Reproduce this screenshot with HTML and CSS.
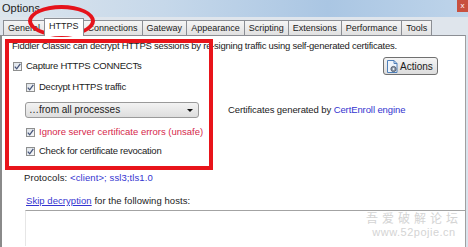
FILE: index.html
```html
<!DOCTYPE html>
<html lang="en">
<head>
    <meta charset="UTF-8">
    <meta name="viewport" content="width=device-width, initial-scale=1.0">
    <title>Options</title>
    <link rel="stylesheet" href="styles.css">
</head>
<body>
    <div class="titlebar">
        <span class="title">Options</span>
        <span class="close">x</span>
    </div>
    <div class="tabs">
        <div class="tab">General</div>
        <div class="tab active">HTTPS</div>
        <div class="tab">Connections</div>
        <div class="tab">Gateway</div>
        <div class="tab">Appearance</div>
        <div class="tab">Scripting</div>
        <div class="tab">Extensions</div>
        <div class="tab">Performance</div>
        <div class="tab">Tools</div>
    </div>
    <div class="panel">
        <div class="intro">Fiddler Classic can decrypt HTTPS sessions by re-signing traffic using self-generated certificates.</div>
        <div class="row row-capture">
            <label class="check"><span class="box"><svg width="7" height="7" viewBox="0 0 7 7"><path d="M0.8 3.6 L2.7 5.8 L6.3 0.8" fill="none" stroke="#46557a" stroke-width="1.3"/></svg></span>Capture HTTPS CONNECTs</label>
            <button class="actions"><svg width="13" height="13" viewBox="0 0 13 13"><path d="M1.5 0.5 H8 L11 3.5 V12.5 H1.5 Z" fill="#eef4fb" stroke="#4f7fb8"/><path d="M8 0.5 V3.5 H11" fill="none" stroke="#4f7fb8"/><circle cx="7.5" cy="9" r="2.6" fill="#8a96a6" stroke="#5b6472"/><circle cx="7.5" cy="9" r="0.9" fill="#eef4fb"/></svg>Actions</button>
        </div>
        <div class="row row-decrypt">
            <label class="check"><span class="box"><svg width="7" height="7" viewBox="0 0 7 7"><path d="M0.8 3.6 L2.7 5.8 L6.3 0.8" fill="none" stroke="#46557a" stroke-width="1.3"/></svg></span>Decrypt HTTPS traffic</label>
        </div>
        <div class="row row-select">
            <div class="select">…from all processes<span class="arrow"></span></div>
            <div class="certs">Certificates generated by <a class="link">CertEnroll engine</a></div>
        </div>
        <div class="row row-ignore">
            <label class="check unsafe"><span class="box"><svg width="7" height="7" viewBox="0 0 7 7"><path d="M0.8 3.6 L2.7 5.8 L6.3 0.8" fill="none" stroke="#46557a" stroke-width="1.3"/></svg></span>Ignore server certificate errors (unsafe)</label>
        </div>
        <div class="row row-revoke">
            <label class="check"><span class="box"><svg width="7" height="7" viewBox="0 0 7 7"><path d="M0.8 3.6 L2.7 5.8 L6.3 0.8" fill="none" stroke="#46557a" stroke-width="1.3"/></svg></span>Check for certificate revocation</label>
        </div>
        <div class="line line-protocols">Protocols: <a class="link">&lt;client&gt;; ssl3;tls1.0</a></div>
        <div class="line line-skip"><a class="link under">Skip decryption</a> for the following hosts:</div>
        <div class="hosts"></div>
    </div>

    <div class="mark-tab"></div>
    <div class="mark-box"></div>
    <div class="watermark">
        <div class="wm-cn">吾爱破解论坛</div>
        <div class="wm-url">www.52pojie.cn</div>
    </div>
</body>
</html>
```

FILE: styles.css
```css
* { box-sizing: border-box; }
body { margin: 0; width: 468px; height: 247px; overflow: hidden; position: relative; font-family: "Liberation Sans", Arial, sans-serif; font-size: 9.5px; letter-spacing: -0.25px; color: #1b1b1b; background: #d9e3ec; }

.titlebar { height: 17px; display: flex; justify-content: space-between; letter-spacing: 0; background: linear-gradient(to right, #dce5ed 0%, #c6d8ea 35%, #aac6e3 70%, #bed4ea 100%); }
.title { font-size: 11px; padding: 2px 0 0 2px; color: #222; }
.close { width: 11px; height: 12px; background: #c8503f; color: #fff; font-size: 8px; text-align: center; line-height: 11px; }

.tabs { display: flex; align-items: flex-end; height: 18px; padding-left: 3px; background: #dfe5ec; letter-spacing: 0; }
.tab { height: 15px; padding: 0 4px; border: 1px solid #8b8e94; border-bottom: none; margin-right: -1px; background: linear-gradient(#f5f5f5, #e1e1e1); line-height: 14px; font-size: 9px; }
.tab.active { height: 18px; background: #fff; margin-bottom: -1px; position: relative; z-index: 1; }

.panel { height: 212px; overflow: hidden; background: #fff; border-left: 2px solid #8a8a8a; border-top: 1px solid #8b8e94; border-right: 1px solid #a0a0a0; margin-right: 2px; padding-top: 4px; }
.intro { height: 12px; line-height: 12px; padding-left: 10px; }

.row { display: flex; align-items: center; height: 12px; line-height: 12px; }
.row-capture { margin-top: 8px; padding-left: 11px; justify-content: space-between; padding-right: 27px; }
.row-decrypt { margin-top: 9px; padding-left: 24px; }
.row-select { margin-top: 9px; padding-left: 23px; height: 16px; }
.row-ignore { margin-top: 8px; padding-left: 24px; letter-spacing: 0; }
.row-revoke { margin-top: 7px; padding-left: 24px; }

.line { height: 12px; line-height: 12px; }
.line-protocols { margin-top: 15px; padding-left: 22px; letter-spacing: 0.1px; }
.line-skip { margin-top: 11px; padding-left: 24px; letter-spacing: 0.05px; }

.check { display: flex; align-items: center; }
.box { width: 9px; height: 9px; margin-right: 4px; border: 1px solid #8e8f8f; background: linear-gradient(135deg, #dde3ea, #f7f7f7); display: flex; align-items: center; justify-content: center; }
.unsafe { color: #d6284b; }

.actions { height: 18px; width: 55px; padding: 0 0 0 2px; display: flex; align-items: center; gap: 1px; font-family: "Liberation Sans", Arial, sans-serif; font-size: 10px; letter-spacing: 0; color: #1b1b1b; border: 1px solid #707070; border-radius: 3px; background: linear-gradient(#f4f4f4, #dcdcdc); }

.select { width: 174px; height: 16px; position: relative; padding-left: 3px; line-height: 14px; font-size: 10px; letter-spacing: 0; border: 1px solid #9a9a9a; border-radius: 3px; background: linear-gradient(#f3f3f3, #dedede); }
.arrow { position: absolute; right: 5px; top: 6px; border-left: 3px solid transparent; border-right: 3px solid transparent; border-top: 3px solid #111; }
.certs { margin-left: 29px; letter-spacing: -0.1px; }

.link { color: #3434d0; }
.under { text-decoration: underline; }

.hosts { margin: 3px 0 0 23px; height: 36px; border-top: 1px solid #a3a3a3; border-left: 1px solid #e6e6e6; }

.mark-tab { position: absolute; left: 28px; top: 5px; width: 67px; height: 32px; border: 4px solid #e5131b; border-radius: 50%; }
.mark-box { position: absolute; left: 5px; top: 39px; width: 208px; height: 131px; border: 4px solid #e8141a; }

.watermark { position: absolute; left: 366px; top: 209px; width: 96px; color: #d4d4d4; text-align: center; letter-spacing: 0; }
.wm-cn { font-family: "Noto Sans CJK SC", sans-serif; font-size: 12px; line-height: 17px; height: 17px; letter-spacing: 4px; }
.wm-url { font-family: "Liberation Sans", Arial, sans-serif; font-size: 11px; line-height: 13px; height: 13px; letter-spacing: 0.5px; }
```
